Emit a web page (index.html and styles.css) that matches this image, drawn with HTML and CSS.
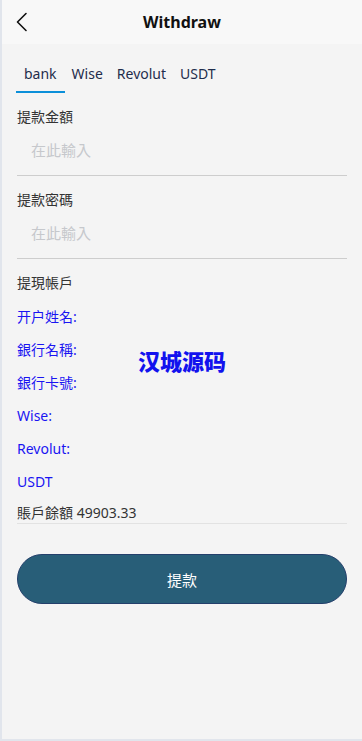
FILE: index.html
```html
<!DOCTYPE html>
<html lang="zh-Hant">
<head>
<meta charset="utf-8">
<meta name="viewport" content="width=device-width, initial-scale=1">
<title>Withdraw</title>
<link rel="stylesheet" href="styles.css">
</head>
<body>
<div class="app">
  <header class="nav">
    <span class="back">
      <svg width="12" height="20" viewBox="0 0 12 20"><polyline points="10,1.5 1.5,10 10,18.5" fill="none" stroke="#111" stroke-width="1.6" stroke-linecap="round" stroke-linejoin="round"/></svg>
    </span>
    <h1 class="title">Withdraw</h1>
    <span></span>
  </header>

  <nav class="tabs">
    <span class="tab active">bank</span>
    <span class="tab">Wise</span>
    <span class="tab">Revolut</span>
    <span class="tab">USDT</span>
  </nav>

  <section class="form">
    <div class="field">
      <div class="label">提款金額</div>
      <div class="input-wrap"><input class="input" type="text" placeholder="在此輸入"></div>
    </div>
    <div class="field">
      <div class="label">提款密碼</div>
      <div class="input-wrap"><input class="input" type="password" placeholder="在此輸入"></div>
    </div>
    <div class="field account">
      <div class="label">提現帳戶</div>
      <ul class="rows">
        <li>开户姓名:</li>
        <li>銀行名稱:</li>
        <li>銀行卡號:</li>
        <li>Wise:</li>
        <li>Revolut:</li>
        <li>USDT</li>
      </ul>
      <div class="balance">賬戶餘額 49903.33</div>
    </div>
    <button class="submit" type="button">提款</button>
  </section>

  <div class="watermark">汉城源码</div>
</div>
</body>
</html>
```

FILE: styles.css
```css
* { box-sizing: border-box; }
html, body { margin: 0; padding: 0; }
body {
  font-family: "Noto Sans", "Noto Sans CJK TC", sans-serif;
  background: #f4f4f4;
  color: #333;
}
.app {
  position: relative;
  width: 362px;
  min-height: 741px;
  background: #f4f4f4;
  border-left: 2px solid #e1e5ec;
  border-bottom: 2px solid #e1e5ec;
}
.nav {
  height: 44px;
  background: #f8f8f8;
  display: grid;
  grid-template-columns: 60px 1fr 60px;
  align-items: center;
}
.back {
  display: flex;
  align-items: center;
  padding-left: 14px;
  height: 44px;
}
.title {
  margin: 0;
  text-align: center;
  font-size: 16px;
  font-weight: 700;
  color: #111;
}
.tabs {
  height: 49px;
  display: flex;
  align-items: flex-end;
  padding-left: 14px;
}
.tab {
  font-size: 14px;
  line-height: 22px;
  padding: 0 7px 6px;
  color: #1f2d4c;
  border-bottom: 2px solid transparent;
}
.tab.active {
  border-bottom-color: #0b8fd9;
  padding: 0 8px 6px;
}
.form {
  padding: 0 15px 0 15px;
}
.field {
  padding-top: 14px;
}
.label {
  font-size: 14px;
  line-height: 20px;
  color: #333;
}
.input-wrap {
  padding: 5px 0 7px;
  border-bottom: 1px solid #cdcdcd;
}
.input {
  display: block;
  width: 100%;
  height: 36px;
  border: 0;
  background: transparent;
  padding: 0 0 0 14px;
  font-family: inherit;
  font-size: 15px;
  color: #333;
  outline: none;
}
.input::placeholder { color: #c6c8cc; }
.rows {
  list-style: none;
  margin: 7px 0 0;
  padding: 0;
}
.rows li {
  font-size: 14px;
  line-height: 33px;
  height: 33px;
  color: #1a14f2;
}
.balance {
  font-size: 14px;
  line-height: 20px;
  padding-top: 5px;
  color: #333;
  border-bottom: 1px solid #e2e2e2;
}
.submit {
  display: block;
  width: 100%;
  height: 50px;
  margin-top: 30px;
  border: 1px solid #243f6b;
  border-radius: 25px;
  background: #285e78;
  color: #fff;
  font-family: inherit;
  font-size: 15px;
}
.watermark {
  position: absolute;
  left: 136px;
  top: 344px;
  font-size: 22px;
  font-weight: 900;
  color: #1212ee;
  font-family: "Noto Sans CJK SC", sans-serif;
}
```
